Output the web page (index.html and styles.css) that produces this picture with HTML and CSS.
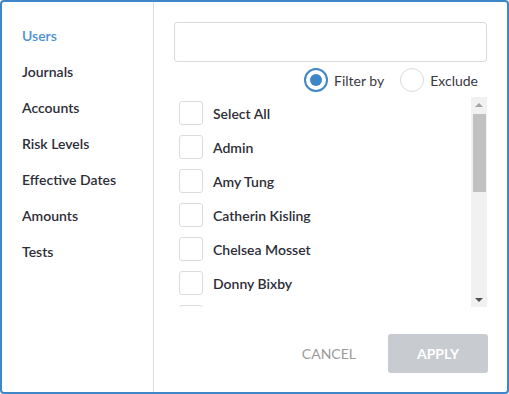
FILE: index.html
```html
<!DOCTYPE html>
<html lang="en">
<head>
    <meta charset="UTF-8">
    <meta name="viewport" content="width=device-width, initial-scale=1.0">
    <title>Filter</title>
    <link rel="stylesheet" href="styles.css">
</head>
<body>
    <div class="dialog">
        <ul class="sidebar">
            <li class="active">Users</li>
            <li>Journals</li>
            <li>Accounts</li>
            <li>Risk Levels</li>
            <li>Effective Dates</li>
            <li>Amounts</li>
            <li>Tests</li>
        </ul>
        <div class="main">
            <input type="text" class="search">
            <div class="modes">
                <label class="mode"><span class="radio checked"></span>Filter by</label>
                <label class="mode"><span class="radio"></span>Exclude</label>
            </div>
            <div class="listbox">
                <ul class="list">
                    <li><span class="box"></span>Select All</li>
                    <li><span class="box"></span>Admin</li>
                    <li><span class="box"></span>Amy Tung</li>
                    <li><span class="box"></span>Catherin Kisling</li>
                    <li><span class="box"></span>Chelsea Mosset</li>
                    <li><span class="box"></span>Donny Bixby</li>
                    <li><span class="box"></span></li>
                </ul>
                <div class="scrollbar">
                    <span class="arrow up"></span>
                    <div class="track"><div class="thumb"></div></div>
                    <span class="arrow down"></span>
                </div>
            </div>
            <div class="actions">
                <button class="cancel">CANCEL</button>
                <button class="apply">APPLY</button>
            </div>
        </div>
    </div>
</body>
</html>
```

FILE: styles.css
```css
* {
    box-sizing: border-box;
}

body {
    margin: 0;
    font-family: Lato, "Open Sans", sans-serif;
    font-size: 14px;
    color: #2d2d38;
    background-color: #fff;
}

.dialog {
    width: 509px;
    height: 394px;
    border: 2px solid #3e86c8;
    border-radius: 4px;
    display: flex;
}

.sidebar {
    width: 152px;
    margin: 0;
    padding: 16px 0 0 20px;
    list-style: none;
    border-right: 1px solid #dcdcdc;
}

.sidebar li {
    height: 36px;
    line-height: 36px;
    font-weight: 600;
}

.sidebar li.active {
    color: #4a8fd4;
}

.main {
    flex: 1;
    padding: 20px 19px 0 20px;
    display: flex;
    flex-direction: column;
}

.search {
    width: 313px;
    height: 40px;
    border: 1px solid #dadada;
    border-radius: 3px;
    margin: 0;
}

.modes {
    display: flex;
    justify-content: flex-end;
    gap: 16px;
    margin-top: 6px;
    padding-right: 10px;
}

.mode {
    display: flex;
    align-items: center;
    gap: 6px;
    height: 24px;
    color: #3a3a44;
}

.radio {
    width: 24px;
    height: 24px;
    border-radius: 50%;
    border: 1px solid #dadada;
}

.radio.checked {
    border: 2px solid #3e86c8;
    display: flex;
    align-items: center;
    justify-content: center;
}

.radio.checked::after {
    content: "";
    width: 12px;
    height: 12px;
    border-radius: 50%;
    background-color: #3e86c8;
}

.listbox {
    width: 313px;
    height: 210px;
    margin-top: 5px;
    display: flex;
}

.list {
    flex: 1;
    margin: 0;
    padding: 4px 0 0 5px;
    list-style: none;
    overflow: hidden;
}

.list li {
    display: flex;
    align-items: center;
    gap: 10px;
    height: 34px;
    padding-bottom: 10px;
    font-weight: 600;
}

.box {
    flex: none;
    width: 24px;
    height: 24px;
    border: 1px solid #dcdcdc;
    border-radius: 3px;
}

.scrollbar {
    width: 16px;
    background-color: #f1f1f1;
    display: flex;
    flex-direction: column;
}

.arrow {
    height: 15px;
    display: flex;
    align-items: center;
    justify-content: center;
}

.arrow::after {
    content: "";
    border-left: 4px solid transparent;
    border-right: 4px solid transparent;
}

.arrow.up::after {
    border-bottom: 4px solid #a3a3a3;
}

.arrow.down::after {
    border-top: 4px solid #505050;
}

.track {
    flex: 1;
    padding: 2px 1px 0 2px;
}

.thumb {
    height: 78px;
    background-color: #c1c1c1;
}

.actions {
    display: flex;
    justify-content: flex-end;
    align-items: center;
    gap: 16px;
    margin-top: 27px;
}

button {
    font-family: inherit;
    font-size: 14px;
    border: none;
    cursor: pointer;
}

.cancel {
    background: none;
    color: #9a9a9a;
    padding: 0 16px;
}

.apply {
    width: 100px;
    height: 39px;
    background-color: #c8cbcf;
    color: #fff;
    font-weight: bold;
    border-radius: 3px;
}
```
